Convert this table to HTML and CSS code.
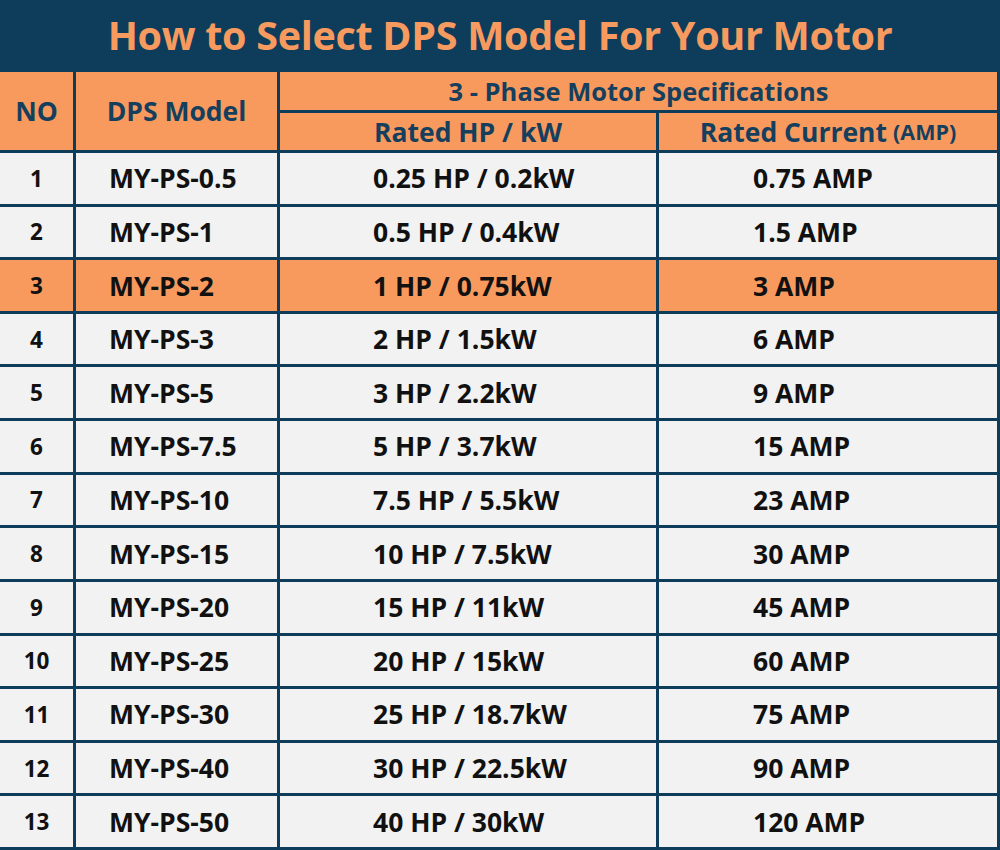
FILE: index.html
```html
<!DOCTYPE html>
<html>
<head>
<meta charset="utf-8">
<link rel="stylesheet" href="styles.css">
</head>
<body>
<div class="page">
  <div class="title">How to Select DPS Model For Your Motor</div>
  <div class="grid">
    <div class="hd no-h">NO</div>
    <div class="hd model-h">DPS Model</div>
    <div class="hd spec-h">3 - Phase Motor Specifications</div>
    <div class="hd">Rated HP / kW</div>
    <div class="hd">Rated Current <span class="small">(AMP)</span></div>

    <div class="c n">1</div><div class="c m">MY-PS-0.5</div><div class="c hp">0.25 HP / 0.2kW</div><div class="c a">0.75 AMP</div>
    <div class="c n">2</div><div class="c m">MY-PS-1</div><div class="c hp">0.5 HP / 0.4kW</div><div class="c a">1.5 AMP</div>
    <div class="c n hl">3</div><div class="c m hl">MY-PS-2</div><div class="c hp hl">1 HP / 0.75kW</div><div class="c a hl">3 AMP</div>
    <div class="c n">4</div><div class="c m">MY-PS-3</div><div class="c hp">2 HP / 1.5kW</div><div class="c a">6 AMP</div>
    <div class="c n">5</div><div class="c m">MY-PS-5</div><div class="c hp">3 HP / 2.2kW</div><div class="c a">9 AMP</div>
    <div class="c n">6</div><div class="c m">MY-PS-7.5</div><div class="c hp">5 HP / 3.7kW</div><div class="c a">15 AMP</div>
    <div class="c n">7</div><div class="c m">MY-PS-10</div><div class="c hp">7.5 HP / 5.5kW</div><div class="c a">23 AMP</div>
    <div class="c n">8</div><div class="c m">MY-PS-15</div><div class="c hp">10 HP / 7.5kW</div><div class="c a">30 AMP</div>
    <div class="c n">9</div><div class="c m">MY-PS-20</div><div class="c hp">15 HP / 11kW</div><div class="c a">45 AMP</div>
    <div class="c n">10</div><div class="c m">MY-PS-25</div><div class="c hp">20 HP / 15kW</div><div class="c a">60 AMP</div>
    <div class="c n">11</div><div class="c m">MY-PS-30</div><div class="c hp">25 HP / 18.7kW</div><div class="c a">75 AMP</div>
    <div class="c n">12</div><div class="c m">MY-PS-40</div><div class="c hp">30 HP / 22.5kW</div><div class="c a">90 AMP</div>
    <div class="c n">13</div><div class="c m">MY-PS-50</div><div class="c hp">40 HP / 30kW</div><div class="c a">120 AMP</div>
  </div>
</div>
</body>
</html>
```

FILE: styles.css
```css
html, body {
  margin: 0;
  padding: 0;
  background: #0e3d5c;
}
.page {
  width: 1000px;
  height: 850px;
  background: #0e3d5c;
  font-family: "Open Sans", "Noto Sans", sans-serif;
  font-weight: 700;
}
.title {
  height: 72px;
  display: flex;
  align-items: center;
  justify-content: center;
  color: #f79a5f;
  font-size: 39.5px;
  letter-spacing: -0.3px;
  padding-bottom: 2px;
  box-sizing: border-box;
}
.grid {
  height: 778px;
  box-sizing: border-box;
  padding-right: 3px;
  padding-bottom: 3px;
  display: grid;
  grid-template-columns: 73px 201px 376px 338px;
  grid-template-rows: 38px 37px repeat(13, 1fr);
  gap: 3px;
}
.hd {
  background: #f89a5e;
  color: #163f5d;
  font-size: 26.5px;
  display: flex;
  align-items: center;
  justify-content: center;
}
.no-h, .model-h {
  grid-row: span 2;
}
.spec-h {
  grid-column: span 2;
  font-size: 25.5px;
}
.small {
  font-size: 21.5px;
  margin-left: 6px;
}
.c {
  background: #f2f2f2;
  color: #111;
  font-size: 26.5px;
  display: flex;
  align-items: center;
}
.c.hl {
  background: #f89a5e;
}
.n {
  justify-content: center;
  font-size: 22.5px;
}
.m {
  padding-left: 33px;
}
.hp {
  padding-left: 93px;
}
.a {
  padding-left: 94px;
}
```
